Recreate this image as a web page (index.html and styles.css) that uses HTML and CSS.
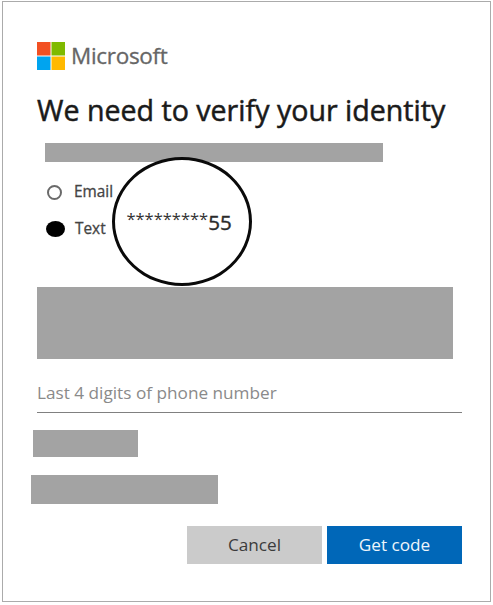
FILE: index.html
```html
<!DOCTYPE html>
<html lang="en">
<head>
<meta charset="utf-8">
<title>Verify your identity</title>
<link rel="stylesheet" href="styles.css">
</head>
<body>
<main class="card">
  <div class="brand">
    <svg class="logo" viewBox="0 0 28 28" aria-hidden="true">
      <rect x="0" y="0" width="13.5" height="13.5" fill="#f25022"/>
      <rect x="14.5" y="0" width="13.5" height="13.5" fill="#7fba00"/>
      <rect x="0" y="14.5" width="13.5" height="13.5" fill="#00a4ef"/>
      <rect x="14.5" y="14.5" width="13.5" height="13.5" fill="#ffb900"/>
    </svg>
    <span class="wordmark">Microsoft</span>
  </div>
  <h1 class="title">We need to verify your identity</h1>
  <div class="bar bar-intro"></div>
  <div class="options">
    <div class="option option-email">
      <span class="radio"></span>
      <span class="option-label">Email</span>
    </div>
    <div class="option option-text">
      <span class="radio radio-on"></span>
      <span class="option-label">Text</span>
    </div>
    <div class="callout"><span class="stars">*********</span><span class="digits">55</span></div>
  </div>
  <div class="bar bar-block"></div>
  <div class="field">Last 4 digits of phone number</div>
  <div class="bar bar-short"></div>
  <div class="bar bar-medium"></div>
  <div class="actions">
    <button class="btn btn-cancel" type="button">Cancel</button>
    <button class="btn btn-primary" type="button">Get code</button>
  </div>
</main>
</body>
</html>
```
FILE: styles.css
```css
* { box-sizing: border-box; }
html, body { margin: 0; padding: 0; background: #fff; }
body { font-family: "Open Sans", "Noto Sans", "Liberation Sans", sans-serif; width: 493px; height: 605px; overflow: hidden; }
.card {
  width: 489px;
  height: 601px;
  margin: 1px 0 0 2px;
  border: 1px solid #ababab;
  padding: 40px 0 0 34px;
  background: #fff;
}
.brand { display: flex; align-items: center; gap: 6px; height: 28px; }
.logo { width: 28px; height: 28px; display: block; flex: none; }
.wordmark { font-size: 22.5px; line-height: 26px; color: #666; letter-spacing: -0.3px; -webkit-text-stroke: 0.3px #666; }
.title {
  margin: 20px 0 0 0;
  font-size: 28.6px;
  line-height: 39px;
  font-weight: 400;
  color: #1a1a1a;
  -webkit-text-stroke: 0.5px #1a1a1a;
  white-space: nowrap;
}
.bar { background: #a3a3a3; }
.bar-intro { width: 338px; height: 19px; margin: 14px 0 0 8px; }
.options { position: relative; height: 125px; }
.option { display: flex; align-items: center; position: relative; }
.option-email { padding: 21px 0 0 10px; height: 39px; }
.option-text { padding: 19px 0 0 9px; height: 36px; }
.radio { width: 15px; height: 15px; border: 2px solid #6a6a6a; border-radius: 50%; flex: none; background: #fff; }
.radio-on { width: 19px; height: 16px; border: 0; background: #000; }
.option-label { font-size: 15.4px; line-height: 18px; color: #444; -webkit-text-stroke: 0.3px #444; margin-left: 12px; }
.option-text .option-label { margin-left: 10px; }
.callout {
  position: absolute;
  left: 75px;
  top: -5px;
  width: 140px;
  height: 129px;
  border: 3px solid #0a0a0a;
  border-radius: 50%;
  background: #fff;
  display: flex;
  align-items: center;
  justify-content: center;
  padding-right: 6px;
}
.stars { font-size: 16.5px; color: #333; position: relative; top: -3px; }
.digits { font-size: 20.5px; color: #2a2a2a; -webkit-text-stroke: 0.4px #2a2a2a; }
.bar-block { width: 416px; height: 72px; }
.field {
  width: 425px;
  height: 54px;
  padding-top: 23px;
  border-bottom: 1.5px solid #808080;
  font-size: 17.2px;
  line-height: 22px;
  color: #8a8a8a;
}
.bar-short { width: 105px; height: 27px; margin: 17px 0 0 -4px; }
.bar-medium { width: 187px; height: 29px; margin: 18px 0 0 -6px; }
.actions { display: flex; gap: 5px; margin: 22px 0 0 150px; }
.btn {
  width: 135px;
  height: 38px;
  border: 0;
  padding: 0;
  font: inherit;
  font-size: 17.2px;
  line-height: 22px;
}
.btn-cancel { background: #cbcbcb; color: #3b3b3b; }
.btn-primary { background: #0067b8; color: #eef5fb; }
```
